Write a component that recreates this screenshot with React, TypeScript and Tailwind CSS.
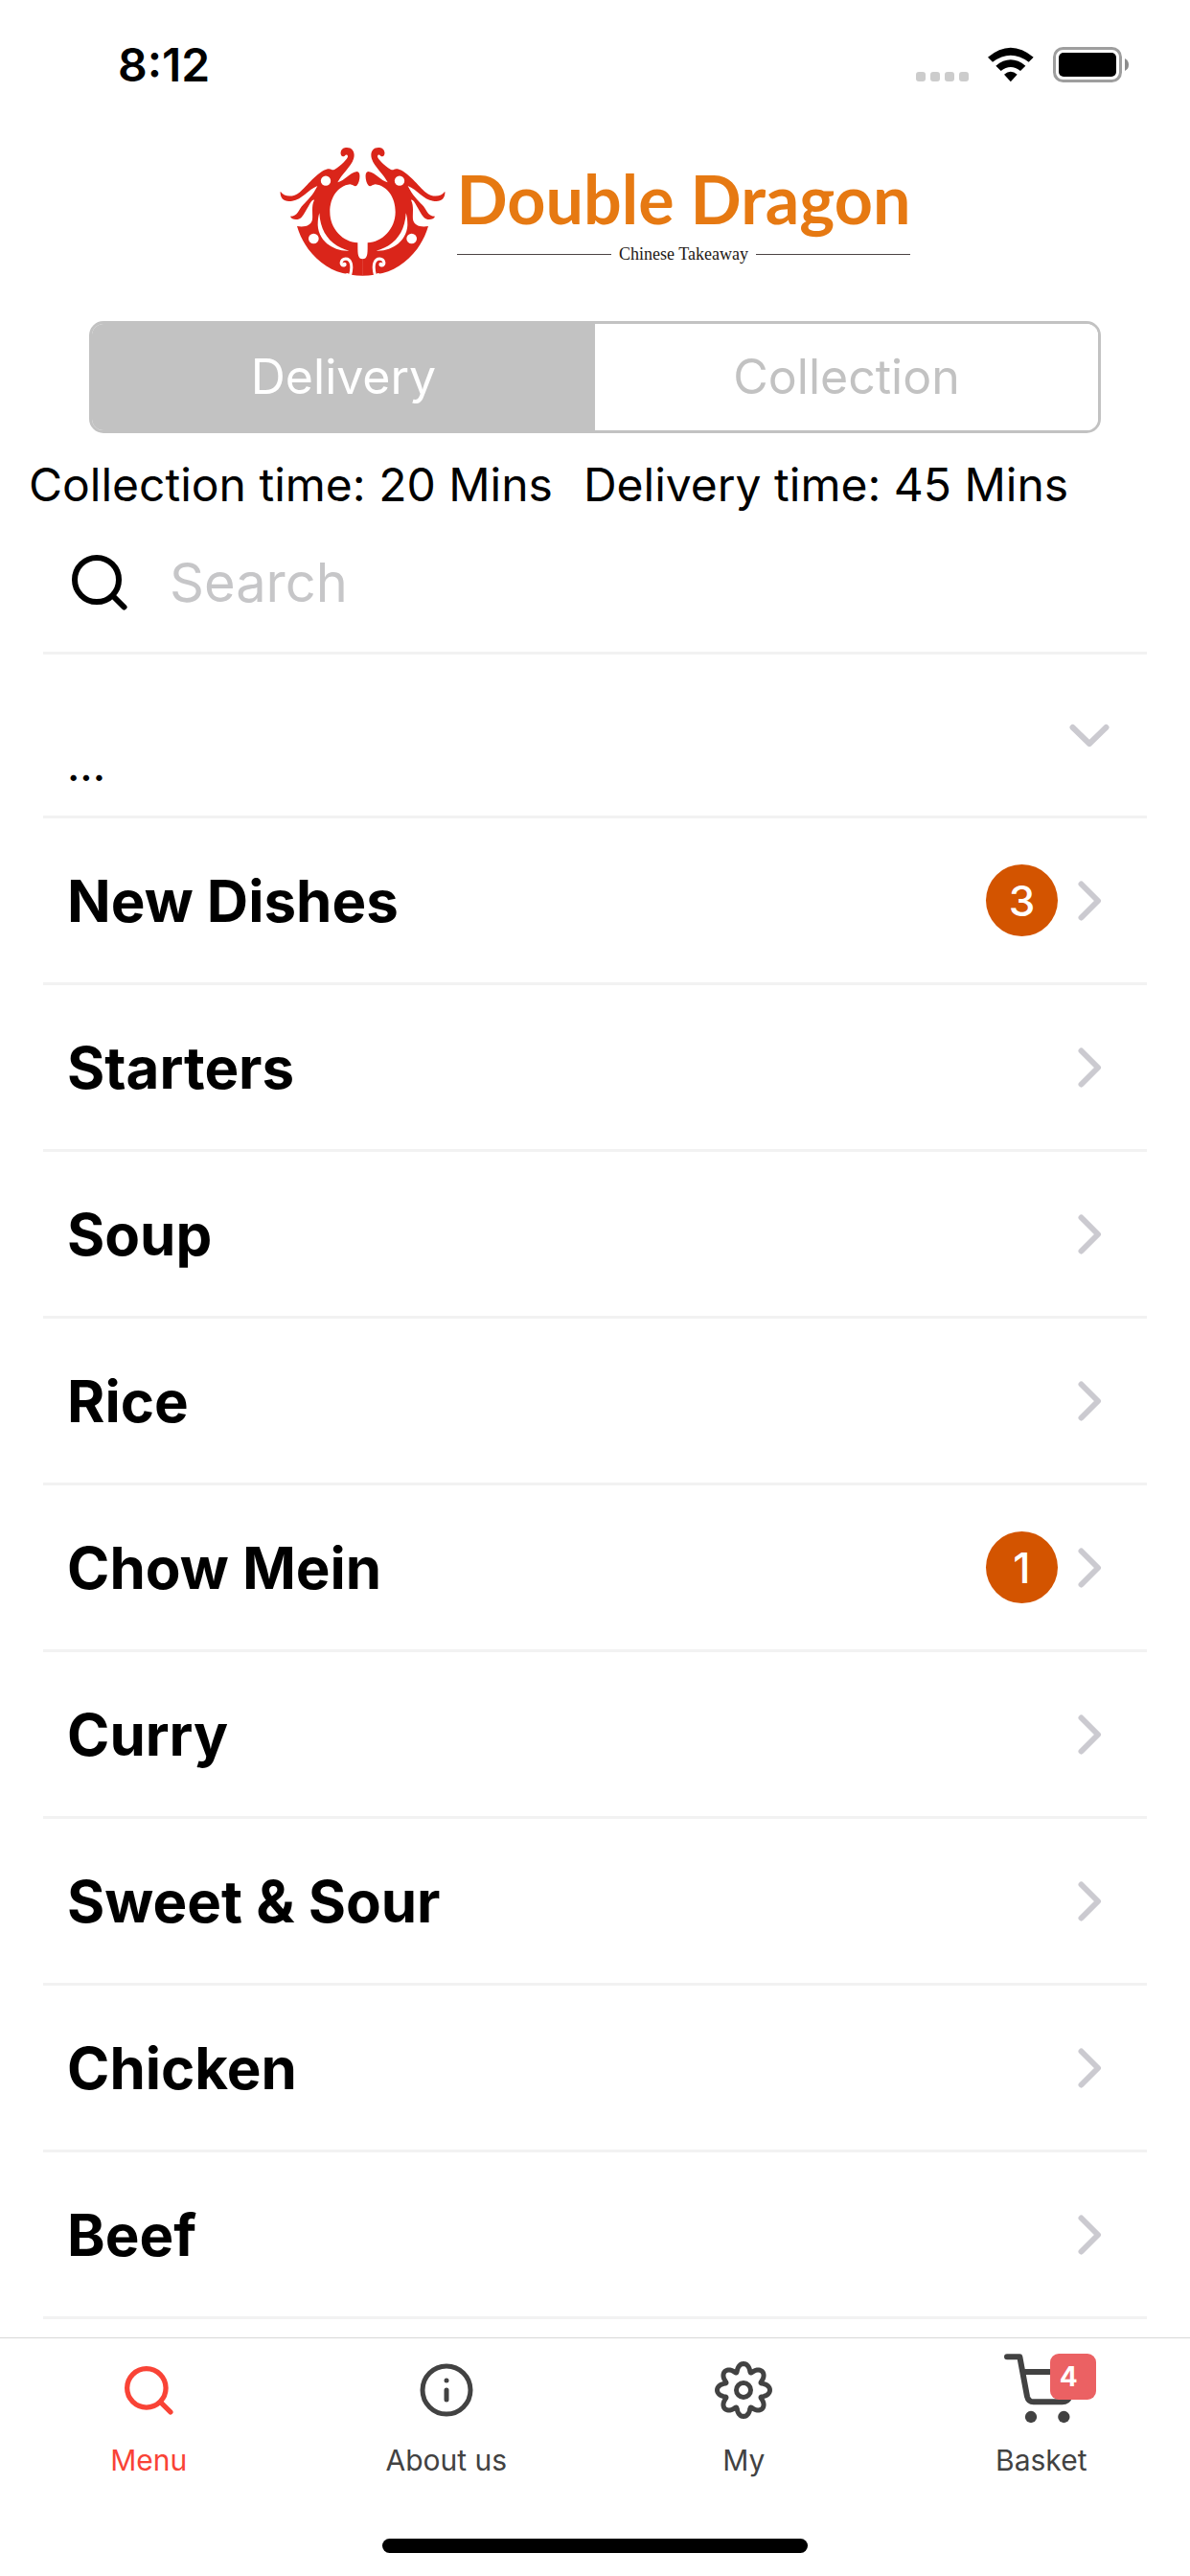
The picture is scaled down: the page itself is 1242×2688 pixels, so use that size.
import React, { useState } from 'react';

interface Category {
    name: string;
    count?: number;
}

const categories: Category[] = [
    { name: 'New Dishes', count: 3 },
    { name: 'Starters' },
    { name: 'Soup' },
    { name: 'Rice' },
    { name: 'Chow Mein', count: 1 },
    { name: 'Curry' },
    { name: 'Sweet & Sour' },
    { name: 'Chicken' },
    { name: 'Beef' },
];

const StatusBar = () => (
    <div className="flex h-[135px] items-center justify-between pl-[123px] pr-16">
        <span className="text-[48px] font-semibold">8:12</span>
        <div className="flex items-center">
            <svg className="mr-5 mt-6 h-[10px] w-[55px]" viewBox="0 0 55 10" fill="#cccccc">
                <rect width="10" height="10" rx="3" />
                <rect x="15" width="10" height="10" rx="3" />
                <rect x="30" width="10" height="10" rx="3" />
                <rect x="45" width="10" height="10" rx="3" />
            </svg>
            <svg className="mr-5 h-[37px] w-12" viewBox="0 0 144 111">
                <path d="M0 32Q71.500 -28 143 32L128 47Q71.500 5 15 47Z" />
                <path d="M25 59Q71.500 21 118 59L102 75Q71.500 51 41 75Z" />
                <path d="M51 86Q71.500 68 92 86L71.500 109Z" />
            </svg>
            <svg className="h-[37px] w-[79px]" viewBox="0 0 79 37">
                <rect x="1.500" y="1.500" width="69" height="34" rx="9" fill="none" stroke="#9e9e9e" strokeWidth="3" />
                <rect x="6" y="6" width="60" height="25" rx="5" />
                <path d="M75 12Q79 14 79 18.500T75 25Z" fill="#8c8c8c" />
            </svg>
        </div>
    </div>
);

const DragonHalf = () => (
    <g>
        <path
            fill="#da251a"
            d="M293 444C280 444 268 443 256 441L245 436C240 438 236 438 230 436C165 420 108 362 87 289C112 293 132 287 135 268C137 250 131 226 141 207
            C130 203 118 243 101 261C92 271 70 270 66 258C90 258 92 236 106 222C120 208 136 193 151 163
            C122 174 103 206 72 210C45 215 33 200 35 180C49 199 74 199 95 183C117 166 150 118 183 110C195 107 194 116 204 112
            C227 97 247 76 246 70C244 64 240 65 236 69C228 75 222 66 224 57C226 47 234 43 243 43C262 43 270 60 264 78
            C256 103 225 128 214 152C237 146 250 122 275 118C288 118 284 150 275 161C269 169 263 159 253 158
            C214 163 190 200 190 245C190 298 232 340 277 341C277 375 276 391 293 392Z"
        />
        <path fill="#fff" d="M157 248C160 315 199 353 250 366C203 369 154 336 152 285C152 268 154 257 157 248Z" />
        <circle cx="177" cy="147" r="15.500" fill="#fff" />
        <circle cx="139" cy="328" r="16" fill="#fff" />
        <path d="M253 445C263 410 255 391 239 391C223 392 221 413 234 412" fill="none" stroke="#fff" strokeWidth="9" strokeLinecap="round" />
        <circle cx="235" cy="409" r="7" fill="#fff" />
    </g>
);

const Logo = () => (
    <div className="flex justify-center gap-3 pt-[18px]">
        <svg className="h-[136px] w-[173px]" viewBox="33 40 519 408">
            <DragonHalf />
            <g transform="translate(585 0) scale(-1 1)">
                <DragonHalf />
            </g>
        </svg>
        <div className="pt-3">
            <h1 className="font-['Lato',sans-serif] text-[70px] font-bold leading-[84px] text-[#e67912]">Double Dragon</h1>
            <div className="mt-1 flex items-center gap-2">
                <span className="h-px flex-1 bg-[#4c4444]" />
                <span className="font-['Liberation_Serif',serif] text-[18px] leading-6 text-[#231815]">Chinese Takeaway</span>
                <span className="h-px flex-1 bg-[#4c4444]" />
            </div>
        </div>
    </div>
);

const SearchIcon = ({ className, strokeWidth }: { className: string; strokeWidth: number }) => (
    <svg className={className} viewBox="0 0 58 58" fill="none" stroke="currentColor" strokeWidth={strokeWidth} strokeLinecap="round">
        <circle cx="26" cy="26" r="23" />
        <path d="M43 43L54.500 54.500" />
    </svg>
);

const Chevron = ({ down = false }: { down?: boolean }) => (
    <svg className="size-[42px]" viewBox="0 0 42 42" fill="none" stroke="#cbcad0" strokeWidth="6" strokeLinecap="round" strokeLinejoin="round">
        <path d={down ? 'M3.500 13L21 30L38.500 13' : 'M12.500 3.500L30 21L12.500 38.500'} />
    </svg>
);

const InfoIcon = () => (
    <svg className="size-14" viewBox="0 0 56 56" fill="none" stroke="currentColor" strokeWidth="5" strokeLinecap="round">
        <circle cx="28" cy="28" r="25" />
        <path d="M28 28V38" />
        <circle cx="28" cy="18" r="2.500" fill="currentColor" stroke="none" />
    </svg>
);

// Eight rounded teeth around the hub
const gearPoints = Array.from({ length: 192 }, (_, i) => {
    const a = (i / 192) * Math.PI * 2;
    const r = 23.5 + 4 * Math.cos(8 * a);
    const b = a + 0.06 * Math.sin(8 * a);
    return `${(30 + r * Math.cos(b)).toFixed(2)},${(30 + r * Math.sin(b)).toFixed(2)}`;
}).join(' ');

const GearIcon = () => (
    <svg className="size-[60px]" viewBox="0 0 60 60" fill="none" stroke="currentColor" strokeWidth="5" strokeLinejoin="round">
        <polygon points={gearPoints} />
        <circle cx="30" cy="30" r="7.500" />
    </svg>
);

const CartIcon = () => (
    <svg className="h-[72px] w-[78px] overflow-visible" viewBox="0 0 234 216" fill="none" stroke="currentColor" strokeWidth="18" strokeLinecap="round" strokeLinejoin="round">
        <path d="M9 4H49L72 128Q76 145 92 145H182Q200 145 205 128L222 51H60" />
        <circle cx="84" cy="192" r="18.500" fill="currentColor" stroke="none" />
        <circle cx="187" cy="192" r="18.500" fill="currentColor" stroke="none" />
    </svg>
);

interface TabProps {
    label: string;
    active?: boolean;
    badge?: number;
    children: React.ReactNode;
}

const Tab: React.FC<TabProps> = ({ label, active, badge, children }) => (
    <a href="#" className={`flex flex-1 flex-col items-center ${active ? 'text-[#f94336]' : 'text-[#424242]'}`}>
        <span className="relative flex h-[72px] items-center">
            {children}
            {badge && (
                <span className="absolute -top-0.5 left-12 flex size-12 items-center rounded-[9px] bg-[#eb6163] pl-[10px] text-[28px] font-bold text-white">
                    {badge}
                </span>
            )}
        </span>
        <span className="mt-[19px] text-[30px] leading-9">{label}</span>
    </a>
);

const App: React.FC = () => {
    const [mode, setMode] = useState('Delivery');

    return (
        <div className="flex min-h-screen flex-col bg-white font-['Inter',sans-serif] text-black">
            <StatusBar />
            <Logo />

            <div className="mx-[93px] mt-[46px] flex h-[117px] overflow-hidden rounded-[15px] border-[3px] border-[#c2c2c2]">
                {['Delivery', 'Collection'].map(m => (
                    <button
                        key={m}
                        type="button"
                        onClick={() => setMode(m)}
                        className={`flex-1 text-[50px] ${mode === m ? 'bg-[#c2c2c2] text-white' : 'bg-white text-[#c2c2c2]'}`}
                    >
                        {m}
                    </button>
                ))}
            </div>

            <div className="mt-6 flex gap-8 whitespace-nowrap pl-[30px] text-[48px] leading-[60px]">
                <p>Collection time: 20 Mins</p>
                <p>Delivery time: 45 Mins</p>
            </div>

            <main className="mx-[45px]">
                <label className="flex h-[147px] items-center gap-11 border-b-[3px] border-[#f2f2f2] pl-[30px]">
                    <SearchIcon className="size-[58px]" strokeWidth={6} />
                    <input
                        type="text"
                        placeholder="Search"
                        aria-label="Search"
                        className="min-w-0 flex-1 text-[56px] outline-none placeholder:text-[#c6c6c8]"
                    />
                </label>

                <button type="button" className="flex h-[171px] w-full items-center justify-between border-b-[3px] border-[#f2f2f2] pl-[25px] pr-[39px]">
                    <span className="self-end pb-[26px] text-[44px] font-medium leading-[52px]">...</span>
                    <Chevron down />
                </button>

                <ul>
                    {categories.map(c => (
                        <li key={c.name} className="border-b-[3px] border-[#f2f2f2]">
                            <a href="#" className="flex h-[171px] items-center pl-[25px] pr-[39px]">
                                <span className="flex-1 text-[60px] font-bold">{c.name}</span>
                                {c.count && (
                                    <span className="mr-3 flex size-[75px] items-center justify-center rounded-full bg-[#d35400] text-[44px] font-medium text-white">
                                        {c.count}
                                    </span>
                                )}
                                <Chevron />
                            </a>
                        </li>
                    ))}
                </ul>
            </main>

            <footer className="mt-auto border-t border-[#d8d8d8] pb-6 pt-[18px]">
                <nav className="flex">
                    <Tab label="Menu" active>
                        <SearchIcon className="size-[51px]" strokeWidth={6} />
                    </Tab>
                    <Tab label="About us">
                        <InfoIcon />
                    </Tab>
                    <Tab label="My">
                        <GearIcon />
                    </Tab>
                    <Tab label="Basket" badge={4}>
                        <CartIcon />
                    </Tab>
                </nav>
                <div className="mx-auto mt-16 h-[15px] w-[444px] rounded-full bg-black" />
            </footer>
        </div>
    );
};

export default App;
